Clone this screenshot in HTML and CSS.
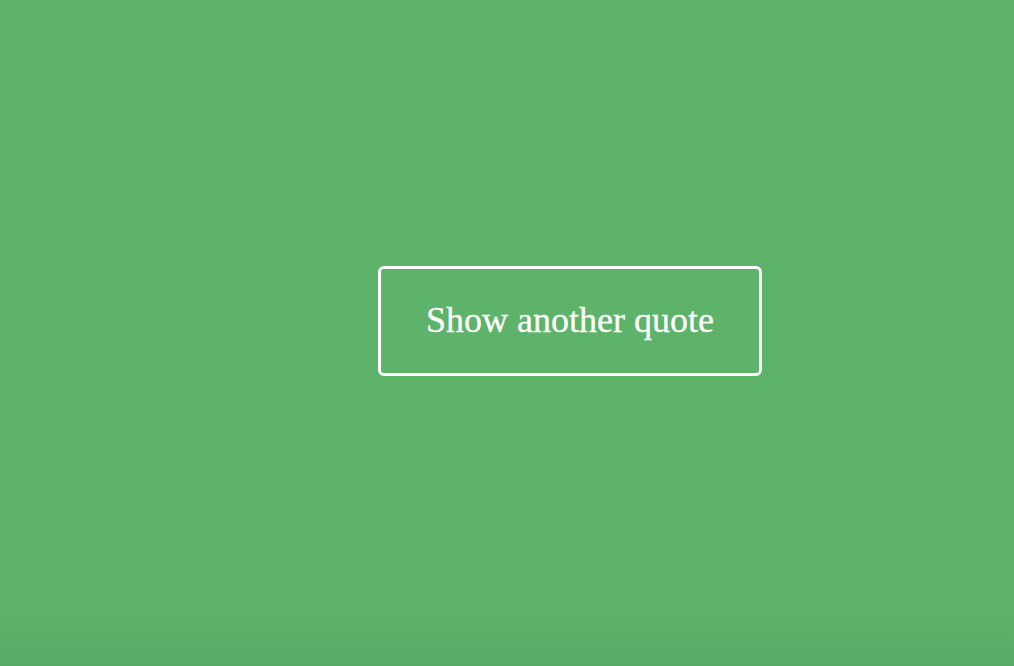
FILE: index.html
```html
<!DOCTYPE html>
<html>
<head>
<meta charset="utf-8">
<link rel="stylesheet" href="styles.css">
</head>
<body>
<main class="page">
  <button class="quote-btn">Show another quote</button>
</main>
</body>
</html>
```
FILE: styles.css
```css
html, body {
  margin: 0;
  height: 100%;
}
body {
  background: linear-gradient(to bottom, #5db36a 0, #5db36a 615px, #58a964 666px);
  font-family: "Liberation Serif", "DejaVu Serif", serif;
}
.page {
  display: flex;
  align-items: flex-start;
  padding: 266px 0 0 378px;
}
.quote-btn {
  box-sizing: border-box;
  width: 384px;
  height: 110px;
  border: 3px solid #ffffff;
  border-radius: 6px;
  background: transparent;
  color: #ffffff;
  font-family: "Liberation Serif", "DejaVu Serif", serif;
  font-size: 36px;
  -webkit-text-stroke: 0.3px #ffffff;
  padding: 0 0 2px 0;
  cursor: pointer;
}
```
